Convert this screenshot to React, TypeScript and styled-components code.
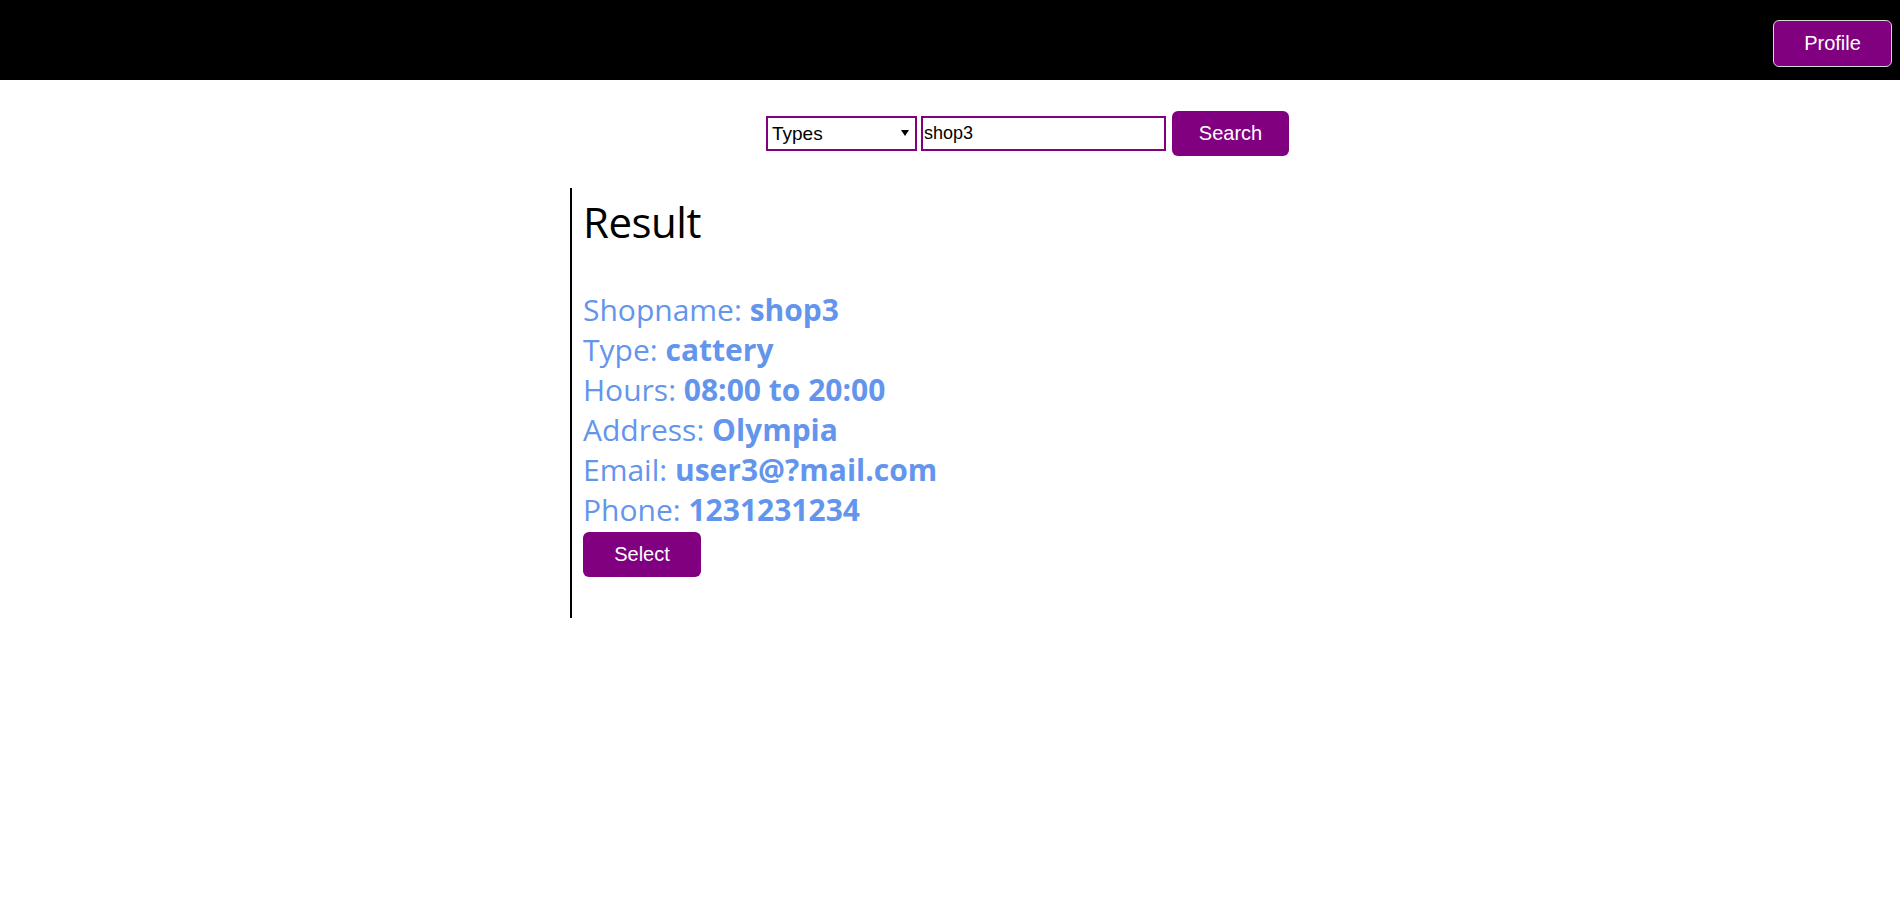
import React, { useState } from "react";
import styled, { createGlobalStyle } from "styled-components";

const GlobalStyle = createGlobalStyle`
  body {
    margin: 0;
    background: #ffffff;
    font-family: "Open Sans", "Noto Sans", sans-serif;
  }
`;

const Header = styled.header`
  display: flex;
  justify-content: flex-end;
  align-items: flex-start;
  height: 80px;
  padding: 20px 8px 0;
  box-sizing: border-box;
  background-color: black;
`;

const PurpleButton = styled.button<{ $w: number; $h: number; $outlined?: boolean }>`
  width: ${(p) => p.$w}px;
  height: ${(p) => p.$h}px;
  background-color: purple;
  color: white;
  font-family: "Liberation Sans", Arial, sans-serif;
  font-size: 20px;
  border: ${(p) => (p.$outlined ? "1px solid #d8d8d8" : "none")};
  border-radius: 6px;
  cursor: pointer;
`;

const SearchRow = styled.form`
  display: flex;
  align-items: center;
  margin: 31px 0 0 766px;
`;

const SelectWrap = styled.div`
  position: relative;
  display: flex;
`;

const TypeSelect = styled.select`
  appearance: none;
  width: 151px;
  height: 35px;
  box-sizing: border-box;
  border: 2px solid purple;
  border-radius: 0;
  font-family: "Liberation Sans", Arial, sans-serif;
  font-size: 19px;
  padding: 0 4px;
  background: white;
  color: black;
  outline: none;
`;

const Caret = styled.svg`
  position: absolute;
  right: 8px;
  top: 14px;
  pointer-events: none;
`;

const QueryInput = styled.input`
  width: 245px;
  height: 35px;
  box-sizing: border-box;
  margin-left: 4px;
  border: 2px solid purple;
  font-family: "Liberation Sans", Arial, sans-serif;
  font-size: 18px;
  padding: 0 1px;
  outline: none;
`;

const SearchButton = styled(PurpleButton)`
  margin-left: 6px;
`;

const ResultPanel = styled.section`
  margin: 32px 0 0 570px;
  width: 600px;
  height: 430px;
  border-left: 2px solid black;
  padding-left: 11px;
  box-sizing: border-box;
`;

const Title = styled.h1`
  margin: 0;
  padding-top: 4px;
  font-size: 42px;
  font-weight: 400;
  line-height: 60px;
  letter-spacing: -0.5px;
  color: black;
`;

const Fields = styled.div`
  margin-top: 38px;
  color: cornflowerblue;
  font-size: 30px;
  line-height: 40px;
`;

const Value = styled.b`
  font-weight: 700;
`;

const SelectButton = styled(PurpleButton)`
  margin-top: 2px;
`;

const fields: [string, string][] = [
  ["Shopname", "shop3"],
  ["Type", "cattery"],
  ["Hours", "08:00 to 20:00"],
  ["Address", "Olympia"],
  ["Email", "user3@?mail.com"],
  ["Phone", "1231231234"],
];

export default function App() {
  const [query, setQuery] = useState("shop3");
  return (
    <>
      <GlobalStyle />
      <Header>
        <PurpleButton $w={119} $h={47} $outlined>
          Profile
        </PurpleButton>
      </Header>
      <SearchRow onSubmit={(e) => e.preventDefault()}>
        <SelectWrap>
          <TypeSelect defaultValue="Types">
            <option>Types</option>
            <option>cattery</option>
            <option>kennel</option>
          </TypeSelect>
          <Caret width="8" height="6" viewBox="0 0 8 6">
            <path d="M0 0 H8 L4 6 Z" fill="black" />
          </Caret>
        </SelectWrap>
        <QueryInput value={query} onChange={(e) => setQuery(e.target.value)} />
        <SearchButton $w={117} $h={45}>
          Search
        </SearchButton>
      </SearchRow>
      <ResultPanel>
        <Title>Result</Title>
        <Fields>
          {fields.map(([k, v]) => (
            <div key={k}>
              {k}: <Value>{v}</Value>
            </div>
          ))}
        </Fields>
        <SelectButton $w={118} $h={45}>
          Select
        </SelectButton>
      </ResultPanel>
    </>
  );
}
